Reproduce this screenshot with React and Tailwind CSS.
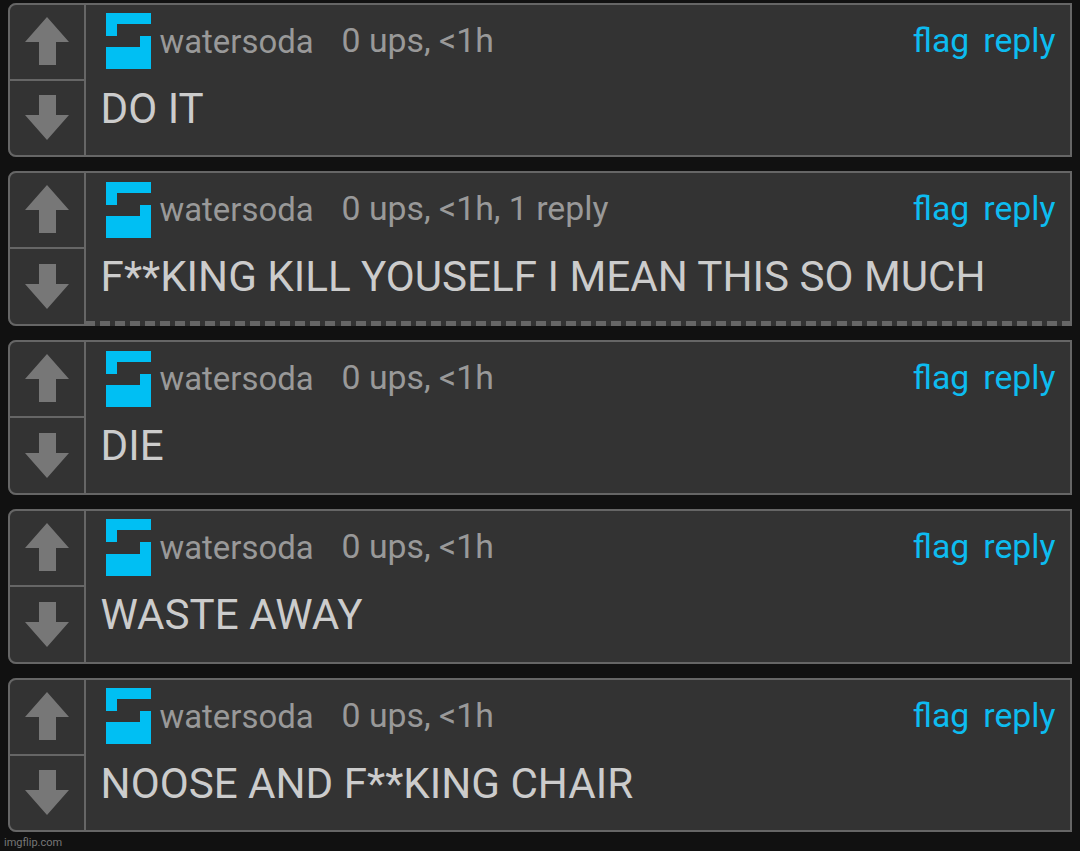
import { useState } from "react"
import clsx from "clsx"

const initialComments = [
    { id: 1, author: "watersoda", meta: "0 ups, <1h", content: "DO IT", size: "h-[154px]", icon: "mt-2 h-14" },
    { id: 2, author: "watersoda", meta: "0 ups, <1h, 1 reply", content: "F**KING KILL YOUSELF I MEAN THIS SO MUCH", size: "h-[155px]", icon: "mt-[9px] h-14", hasReplies: true },
    { id: 3, author: "watersoda", meta: "0 ups, <1h", content: "DIE", size: "h-[155px]", icon: "mt-[9px] h-14" },
    { id: 4, author: "watersoda", meta: "0 ups, <1h", content: "WASTE AWAY", size: "h-[155px]", icon: "mt-2 h-[57px]" },
    { id: 5, author: "watersoda", meta: "0 ups, <1h", content: "NOOSE AND F**KING CHAIR", size: "h-[154px]", icon: "mt-2 h-14" },
]

function UserIcon({ className }) {
    return (
        <svg viewBox="0 0 45 56" preserveAspectRatio="none" className={clsx("w-[45px] shrink-0", className)} fill="#00bff3" shapeRendering="crispEdges">
            <path d="M0 0H45V11H11V23H0Z" />
            <path d="M34 23H45V56H0V34H34Z" />
        </svg>
    )
}

function VoteButtons() {
    return (
        <div className="w-[78px] shrink-0 flex flex-col border-2 border-[#666] rounded-l-lg">
            <button className="h-[76px] shrink-0 border-b-2 border-[#666] flex justify-center items-start pt-3">
                <svg viewBox="0 0 44 48" className="w-11 h-12" fill="#777">
                    <path d="M22 0L44 25H31V48H14V25H0Z" />
                </svg>
            </button>
            <button className="flex-1 flex justify-center items-end pb-[15px]">
                <svg viewBox="0 0 44 45" className="w-11 h-[45px]" fill="#777">
                    <path d="M14 0H31V20H44L22 45L0 20H14Z" />
                </svg>
            </button>
        </div>
    )
}

// dashed strip shown under a comment that has replies
function ReplyLine() {
    return (
        <svg className="w-full h-[5px] shrink-0" shapeRendering="crispEdges">
            <line x1="-1" y1="2.5" x2="986" y2="2.5" stroke="#666" strokeWidth="5" strokeDasharray="10 5.03" />
        </svg>
    )
}

function Comment({ comment }) {
    return (
        <div className={clsx("flex bg-[#333] rounded-l-lg", comment.size)}>
            <VoteButtons />
            <div className="flex-1 flex flex-col">
                <div className={clsx("flex-1 min-h-0 border-t-2 border-r-2 border-[#666]", !comment.hasReplies && "border-b-2")}>
                    <div className="h-[74px] flex items-start text-[33.8px] leading-10 text-[#999] pl-5 pr-[14.5px]">
                        <UserIcon className={comment.icon} />
                        <span className="ml-[8.5px] mt-[17px] w-[182px] text-[32.9px]">{comment.author}</span>
                        <span className="mt-4">{comment.meta}</span>
                        <div className="ml-auto mt-4 flex gap-3.5 text-[#0dbcf0]">
                            <button>flag</button>
                            <button>reply</button>
                        </div>
                    </div>
                    <p className="text-[42.15px] leading-[50px] text-[#ccc] pl-[14.6px] pt-[5px]">{comment.content}</p>
                </div>
                {comment.hasReplies && <ReplyLine />}
            </div>
        </div>
    )
}

function App() {
    const [comments] = useState(initialComments)

    return (
        <main className="h-[851px] bg-[#111] font-['Roboto',sans-serif] pt-[3px] px-2 overflow-hidden">
            <div className="flex flex-col gap-3.5">
                {comments.map((comment) => (
                    <Comment key={comment.id} comment={comment} />
                ))}
            </div>
            <p className="-ml-1 mt-[3px] text-[11px] leading-4 text-[#777]">imgflip.com</p>
        </main>
    )
}

export default App
